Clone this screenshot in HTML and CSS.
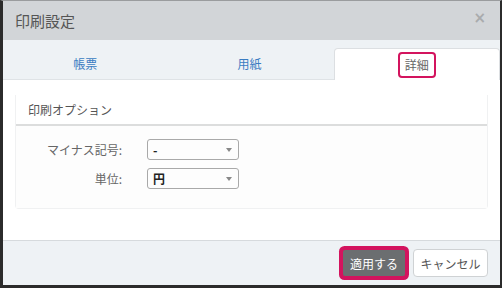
FILE: index.html
```html
<!DOCTYPE html>
<html lang="ja">
<head>
    <meta charset="UTF-8">
    <title>印刷設定</title>
    <link rel="stylesheet" href="styles.css">
</head>
<body>
    <div class="dialog">
        <div class="dialog-header">
            <h1>印刷設定</h1>
            <span class="close">&times;</span>
        </div>

        <div class="tabs">
            <div class="tab">帳票</div>
            <div class="tab">用紙</div>
            <div class="tab active"><span class="mark">詳細</span></div>
        </div>

        <div class="dialog-body">
            <div class="panel">
                <div class="panel-heading">印刷オプション</div>
                <div class="panel-body">
                    <label>マイナス記号:</label>
                    <div class="select"><span>-</span><i class="caret"></i></div>
                    <label>単位:</label>
                    <div class="select"><span>円</span><i class="caret"></i></div>
                </div>
            </div>
        </div>

        <div class="dialog-footer">
            <button class="btn btn-apply">適用する</button>
            <button class="btn btn-cancel">キャンセル</button>
        </div>
    </div>
</body>
</html>
```

FILE: styles.css
```css
:root {
    --pink: #d3145e;
    --tab-bg: #eef2f5;
    --text: #555;
    --link: #3a7cc2;
}

* {
    margin: 0;
    padding: 0;
    box-sizing: border-box;
}

body {
    font-family: "Noto Sans CJK JP", "Noto Sans", sans-serif;
    color: var(--text);
    background: #fff;
}

.dialog {
    width: 502px;
    height: 288px;
    display: flex;
    flex-direction: column;
    border-top: 1px solid #9a9c9e;
    border-left: 3px solid #2b2b2b;
    border-right: 2px solid #2b2b2b;
    border-bottom: 3px solid #2b2b2b;
}

.dialog-header {
    height: 39px;
    background: #d2d5d8;
    display: flex;
    align-items: center;
    justify-content: space-between;
    padding: 0 14px 0 12px;
}

.dialog-header h1 {
    font-size: 15px;
    font-weight: 400;
    color: #555;
}

.close {
    font-family: "DejaVu Sans", sans-serif;
    font-size: 15px;
    font-weight: 700;
    color: #a9abad;
    margin-top: -6px;
}

.tabs {
    height: 40px;
    background: var(--tab-bg);
    display: flex;
    align-items: flex-end;
    border-bottom: 1px solid #dfe3e6;
}

.tab {
    flex: 1;
    height: 31px;
    display: flex;
    align-items: center;
    justify-content: center;
    font-size: 12px;
    color: var(--link);
}

.tab.active {
    background: #fff;
    border: 1px solid #dcdfe2;
    border-bottom: none;
    border-radius: 4px 4px 0 0;
    color: #666;
    margin-left: 2px;
    margin-bottom: -1px;
    height: 32px;
}

.mark {
    border: 2px solid var(--pink);
    border-radius: 4px;
    padding: 2px 5px;
    line-height: 18px;
}

.dialog-body {
    flex: 1;
    padding: 15px 12px 0 12px;
    background: #fff;
}

.panel {
    border: 1px solid #f0f1f2;
    border-top: none;
    border-radius: 0 0 4px 4px;
}

.panel-heading {
    height: 31px;
    display: flex;
    align-items: center;
    padding-left: 12px;
    font-size: 12px;
    color: #555;
    border-bottom: 2px solid #dcdddd;
}

.panel-body {
    display: grid;
    grid-template-columns: 106px 92px;
    column-gap: 25px;
    row-gap: 8px;
    align-items: center;
    padding: 13px 0 19px 0;
    background: #fdfdfd;
}

.panel-body label {
    text-align: right;
    font-size: 12px;
    color: #666;
}

.select {
    height: 21px;
    border: 1px solid #a9a9a9;
    border-radius: 3px;
    display: flex;
    align-items: center;
    justify-content: space-between;
    padding: 0 6px 0 5px;
    font-size: 12px;
    color: #222;
    font-weight: 700;
}

.caret {
    width: 0;
    height: 0;
    border-left: 3px solid transparent;
    border-right: 3px solid transparent;
    border-top: 4px solid #888;
}

.dialog-footer {
    height: 45px;
    background: var(--tab-bg);
    border-top: 1px solid #d6dadd;
    display: flex;
    align-items: center;
    justify-content: flex-end;
    gap: 8px;
    padding-right: 12px;
}

.btn {
    font-family: inherit;
    font-size: 12px;
    border-radius: 3px;
    cursor: pointer;
}

.btn-apply {
    width: 62px;
    height: 26px;
    background: #6b6e70;
    color: #fff;
    border: none;
    box-shadow: 0 0 0 4px var(--pink);
    border-radius: 2px;
}

.btn-cancel {
    width: 75px;
    height: 28px;
    background: #fff;
    color: #555;
    border: 1px solid #cfd2d4;
    border-radius: 4px;
}
```
